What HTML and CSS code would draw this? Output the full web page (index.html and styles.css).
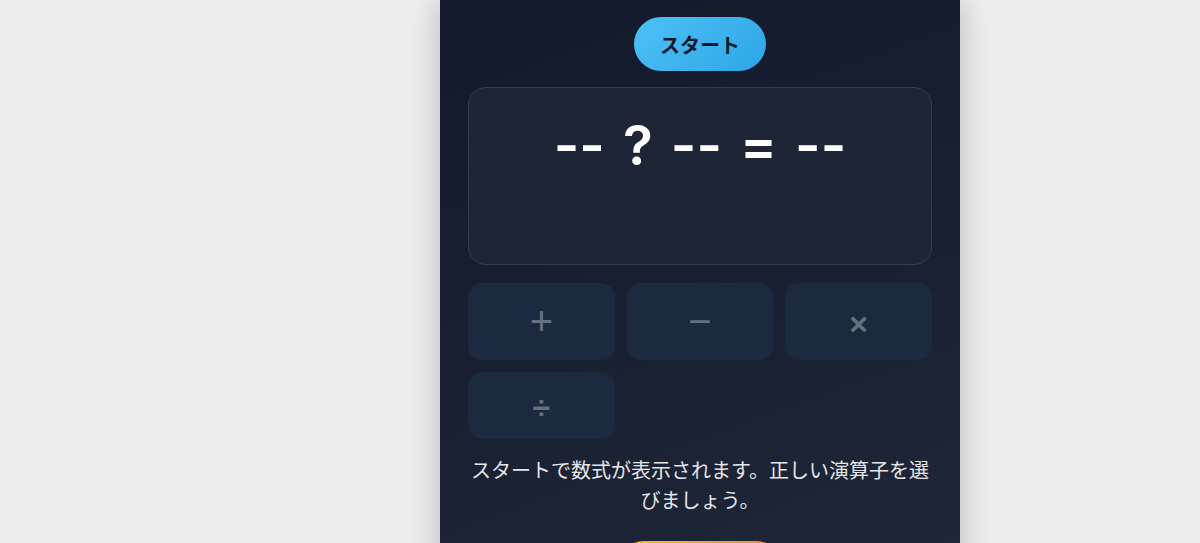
FILE: index.html
```html
<!DOCTYPE html>
<html lang="ja">
<head>
    <meta charset="UTF-8">
    <meta name="viewport" content="width=device-width, initial-scale=1.0">
    <title>演算子クイズ</title>
    <link rel="stylesheet" href="styles.css">
</head>
<body>
    <div class="page">
        <div class="quiz-card">
            <button class="startBtn">スタート</button>
            <div class="formulaBox">
                <div class="formula">
                    <span class="num">--</span>
                    <span class="op">?</span>
                    <span class="num">--</span>
                    <span class="op">=</span>
                    <span class="num">--</span>
                </div>
            </div>
            <div class="opGrid">
                <button class="opBtn" disabled>+</button>
                <button class="opBtn" disabled>−</button>
                <button class="opBtn small" disabled>×</button>
                <button class="opBtn small" disabled>÷</button>
            </div>
            <p class="guide">スタートで数式が表示されます。正しい演算子を選びましょう。</p>
            <button class="nextBtn">もう一度</button>
        </div>
    </div>
</body>
</html>
```

FILE: styles.css
```css
body {
    margin: 0;
    background-color: #ededed;
    font-family: 'Liberation Sans', 'Noto Sans CJK JP', sans-serif;
    overflow: hidden;
}
.page {
    display: flex;
    padding-left: 440px;
}
.quiz-card {
    width: 520px;
    min-height: 640px;
    box-sizing: border-box;
    padding: 17px 28px 0;
    display: flex;
    flex-direction: column;
    align-items: center;
    background: linear-gradient(160deg, #131a2b 0%, #1a2132 55%, #20283a 100%);
    box-shadow: 0 0 30px rgba(0, 0, 0, .22);
}
.startBtn {
    height: 54px;
    padding: 0 26px;
    border: 0;
    border-radius: 27px;
    background: linear-gradient(135deg, #4dc0f6, #2ea6e6);
    color: #0f1a2a;
    font-family: 'Noto Sans CJK JP', sans-serif;
    font-size: 20px;
    font-weight: 700;
    cursor: pointer;
}
.formulaBox {
    width: 100%;
    height: 178px;
    margin-top: 16px;
    box-sizing: border-box;
    padding-top: 24px;
    border: 1px solid #353e50;
    border-radius: 18px;
    background-color: #1d2536;
}
.formula {
    display: flex;
    justify-content: center;
    gap: 18px;
    color: #ffffff;
    font-family: 'Inter', sans-serif;
    font-size: 55px;
    font-weight: 600;
    line-height: 67px;
}
.opGrid {
    width: 100%;
    margin-top: 18px;
    display: grid;
    grid-template-columns: repeat(3, 1fr);
    grid-template-rows: 77px 67px;
    gap: 12px;
}
.opBtn {
    border: 0;
    border-radius: 14px;
    background-color: #1b2a3e;
    color: #687080;
    font-family: 'Liberation Sans', sans-serif;
    font-size: 40px;
    font-weight: 400;
    padding: 0;
}
.opBtn.small {
    font-size: 32px;
    font-weight: 700;
    padding-top: 6px;
}
.guide {
    margin: 16px 0 0;
    color: #e4e6ea;
    font-family: 'Noto Sans CJK JP', sans-serif;
    font-size: 20px;
    line-height: 30px;
    text-align: center;
}
.nextBtn {
    margin-top: 26px;
    width: 166px;
    height: 54px;
    border: 0;
    border-radius: 27px;
    background: linear-gradient(90deg, #fbbf24, #f0892c);
    color: #1a1a1a;
    font-family: 'Noto Sans CJK JP', sans-serif;
    font-size: 19px;
    font-weight: 700;
}
```
